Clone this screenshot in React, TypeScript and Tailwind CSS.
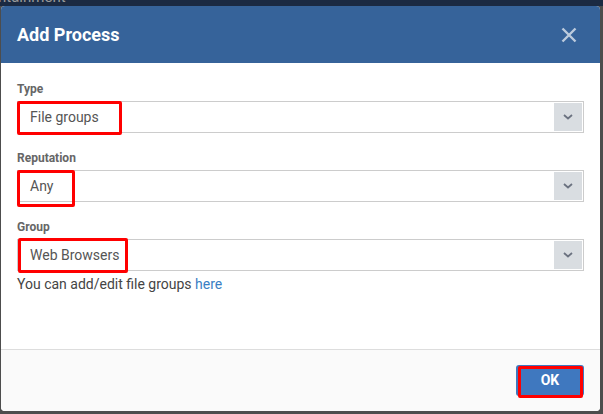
import React from "react";

const Chevron = () => (
  <svg width="10" height="6" viewBox="0 0 10 6" fill="none">
    <path d="M1 1l4 3.5L9 1" stroke="#6b7280" strokeWidth="1.8" />
  </svg>
);

type SelectProps = {
  value: string;
  mark: string;
};

const SelectField = ({ value, mark }: SelectProps) => (
  <div className="relative flex h-[32px] items-center border border-[#cccccc] bg-white">
    <span className="flex-1 pl-[12px] text-[14px] text-[#555555]">{value}</span>
    <div className="mr-px flex h-[28px] w-[28px] items-center justify-center bg-[#d9dde1]">
      <Chevron />
    </div>
    <div className={"pointer-events-none absolute rounded-[2px] border-[3px] border-[#ff0000] " + mark} />
  </div>
);

const Field = ({ label, children }: { label: string; children: React.ReactNode }) => (
  <div className="flex flex-col">
    <label className="mb-[4px] text-[12px] leading-[16px] font-bold text-[#666666]">{label}</label>
    {children}
  </div>
);

const App = () => {
  return (
    <div className="flex h-[414px] w-[603px] flex-col overflow-hidden bg-[#4d4d4d] font-['Roboto',sans-serif]">
      <div className="h-[6px] overflow-hidden bg-[#1b2a42]">
        <p className="mt-[-11px] ml-[-2px] text-[15px] leading-[16px] text-[#9a9a9a]">ntainment</p>
      </div>
      <div className="flex">
        <div className="w-px" />
        <div className="flex h-[405px] w-[599px] flex-col overflow-hidden rounded-[4px] bg-white">
          <div className="flex h-[57px] items-center justify-between bg-[#36639a] pr-[23px] pl-[16px]">
            <h1 className="text-[18px] font-bold text-white">Add Process</h1>
            <svg width="16" height="16" viewBox="0 0 16 16">
              <path d="M1.5 1.5l13 13M14.5 1.5l-13 13" stroke="#bccbdd" strokeWidth="2.4" />
            </svg>
          </div>
          <div className="flex h-[286px] flex-col gap-[17px] px-[16px] pt-[18px]">
            <Field label="Type">
              <SelectField value="File groups" mark="-top-[1px] -left-[1px] h-[34px] w-[105px]" />
            </Field>
            <Field label="Reputation">
              <SelectField value="Any" mark="-top-[1px] -left-[1px] h-[37px] w-[58px]" />
            </Field>
            <Field label="Group">
              <div className="flex flex-col">
                <SelectField value="Web Browsers" mark="-top-[2px] left-0 h-[35px] w-[110px]" />
                <p className="mt-[3px] text-[14px] leading-[20px] text-[#444444]">
                  You can add/edit file groups <span className="text-[#3a80c4]">here</span>
                </p>
              </div>
            </Field>
          </div>
          <div className="h-px bg-[#dddddd]" />
          <div className="flex flex-1 items-center justify-end bg-[#fafafa] pr-[16px]">
            <div className="relative">
              <button className="h-[31px] w-[68px] rounded-[3px] bg-[#3f78bf] text-[14px] font-bold text-white">
                OK
              </button>
              <div className="pointer-events-none absolute top-[1px] left-[2px] h-[32px] w-[65px] rounded-[2px] border-[3px] border-[#ff0000]" />
            </div>
          </div>
        </div>
      </div>
    </div>
  );
};

export default App;
